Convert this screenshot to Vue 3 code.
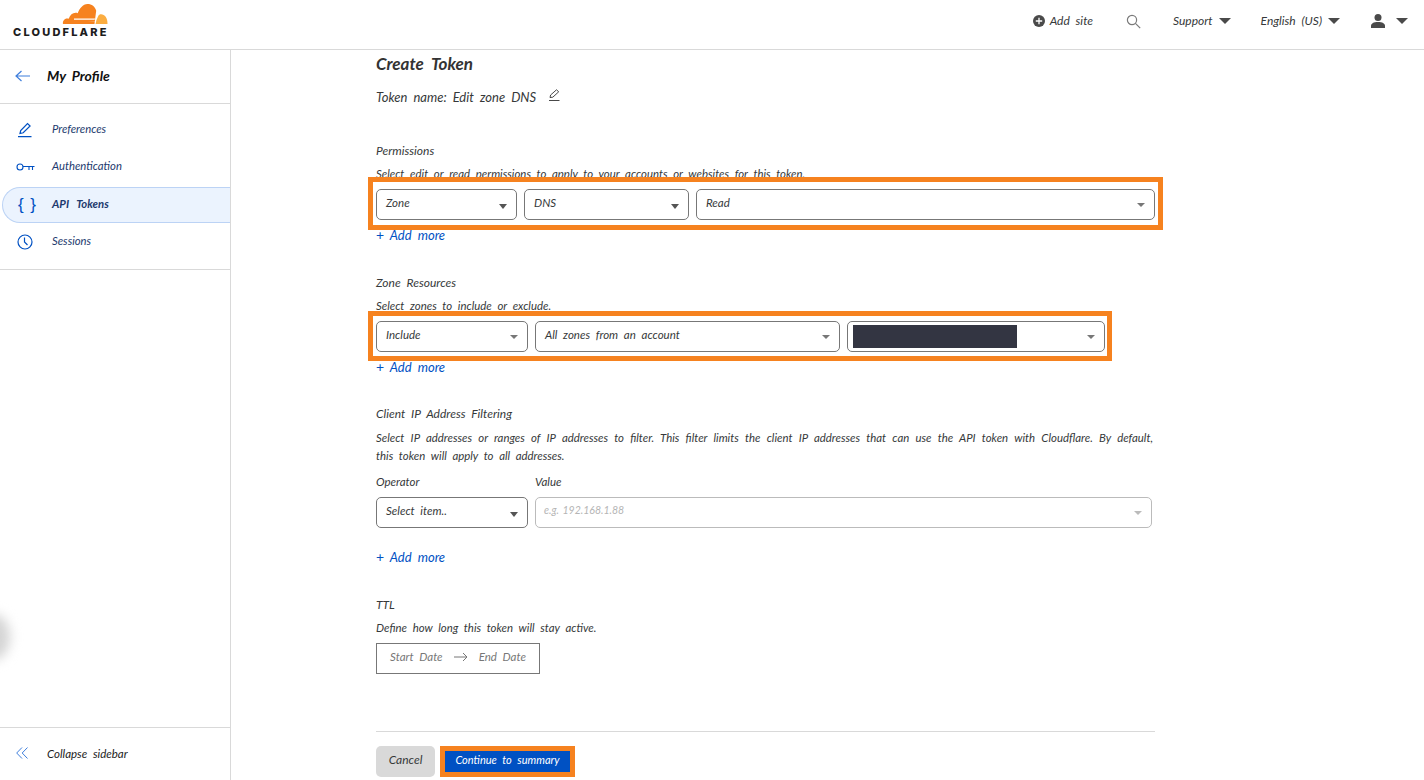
<template>
  <div class="page">
    <header class="topbar">
      <div class="logo">
        <svg class="cloud" width="46" height="22" viewBox="0 0 46 22">
          <path fill="#f6821f" d="M1 21c-.6-3 1.400-5.500 4.200-5.500.6 0 1 .1 1.500.3C8 12 10.600 9.800 13.500 9.800c.9 0 1.500.1 2.200.4C17.500 5.700 20.800 1 25.500 1c4.200 0 7.600 2.700 8.700 6.700l-.6 4.500L32.500 21z"/>
          <path fill="#fbad41" d="M33.500 21l1-4 2-4.500c.8-.9 1.500-1.300 2.500-1.300 3.800 0 6.500 3.500 6.500 9.800z"/>
          <path fill="#fff" d="M12 15.500h21.500l-1 1.200H12zM33.500 18.200l-8-.2h8.800z"/>
        </svg>
        <span class="wordmark">CLOUDFLARE</span>
      </div>
      <nav class="topnav">
        <a class="add-site">
          <svg width="12" height="12" viewBox="0 0 12 12"><circle cx="6" cy="6" r="6" fill="#4a4a4a"/><path d="M6 2.800v6.400M2.800 6h6.400" stroke="#fff" stroke-width="1.300"/></svg>
          <span>Add site</span>
        </a>
        <svg class="search" width="15" height="15" viewBox="0 0 15 15" fill="none" stroke="#7a7a7a" stroke-width="1.200"><circle cx="6" cy="6" r="4.600"/><path d="M9.400 9.400l4.800 4.800"/></svg>
        <a class="menu support">Support <i class="caret"></i></a>
        <a class="menu lang">English (US) <i class="caret"></i></a>
        <a class="menu account">
          <svg width="14" height="14" viewBox="0 0 14 14" fill="#4a4a4a"><circle cx="7" cy="3.600" r="3.500"/><path d="M0 14v-2.200c0-2.200 2.600-3.800 7-3.800s7 1.600 7 3.800V14z"/></svg>
          <i class="caret"></i>
        </a>
      </nav>
    </header>

    <div class="body">
      <aside class="sidebar">
        <div class="profile">
          <svg width="16" height="12" viewBox="0 0 16 12" fill="none" stroke="#3f7fdc" stroke-width="1.200"><path d="M15 6H1M6.500 1L1 6l5.500 5"/></svg>
          <span>My Profile</span>
        </div>
        <ul class="nav">
          <li v-for="item in navItems" :key="item.label" :class="{ active: item.active }">
            <span class="nav-icon">
              <svg v-if="item.icon === 'pencil'" width="16" height="16" viewBox="0 0 16 16" fill="none" stroke="#0051c3" stroke-width="1.200"><path d="M3 11.500l.7-3L10.500 1.500l2.600 2.500-6.900 6.800zM1 14.700h13.500"/></svg>
              <svg v-else-if="item.icon === 'key'" width="19" height="8" viewBox="0 0 19 8" fill="none" stroke="#0051c3" stroke-width="1.100"><circle cx="4" cy="4" r="3"/><path d="M7 3.500h11.500M13 3.500V7M16.500 3.500V7"/></svg>
              <span v-else-if="item.icon === 'braces'" class="braces">{ }</span>
              <svg v-else width="16" height="16" viewBox="0 0 16 16" fill="none" stroke="#0051c3" stroke-width="1.200"><circle cx="8" cy="8" r="7"/><path d="M7.500 3.500V8l3 3"/></svg>
            </span>
            <span class="nav-label">{{ item.label }}</span>
          </li>
        </ul>
        <div class="collapse">
          <svg width="12" height="12" viewBox="0 0 12 12" fill="none" stroke="#3f7fdc" stroke-width="1"><path d="M6 .5L.7 6 6 11.500M11.500.5L6.200 6l5.300 5.500"/></svg>
          <span>Collapse sidebar</span>
        </div>
      </aside>

      <main class="content">
        <h1>Create Token</h1>
        <div class="token-name">
          <span>Token name: Edit zone DNS</span>
          <svg width="13" height="13" viewBox="0 0 13 13" fill="none" stroke="#333" stroke-width=".9"><path d="M2 8.500l.6-2.500L8.500.8l2.200 2-5.900 5.400zM1 11.500h10.500"/></svg>
        </div>

        <section class="permissions">
          <h2>Permissions</h2>
          <p>Select edit or read permissions to apply to your accounts or websites for this token.</p>
          <div class="mark mark-one">
            <div class="row">
              <div class="select w141">Zone<i class="arrow"></i></div>
              <div class="select w165">DNS<i class="arrow"></i></div>
              <div class="select grow">Read<i class="arrow small"></i></div>
            </div>
          </div>
          <a class="add-more first"><b>+</b> Add more</a>
        </section>

        <section class="zones">
          <h2>Zone Resources</h2>
          <p>Select zones to include or exclude.</p>
          <div class="mark mark-two">
            <div class="row">
              <div class="select w152">Include<i class="arrow small"></i></div>
              <div class="select w305">All zones from an account<i class="arrow small"></i></div>
              <div class="select w258"><span class="redacted"></span><i class="arrow small"></i></div>
            </div>
          </div>
          <a class="add-more second"><b>+</b> Add more</a>
        </section>

        <section class="ip-filter">
          <h2>Client IP Address Filtering</h2>
          <p class="long">Select IP addresses or ranges of IP addresses to filter. This filter limits the client IP addresses that can use the API token with Cloudflare. By default, this token will apply to all addresses.</p>
          <div class="labels">
            <label class="w152">Operator</label>
            <label>Value</label>
          </div>
          <div class="row narrow">
            <div class="select w152">Select item..<i class="arrow"></i></div>
            <div class="select grow disabled">e.g. 192.168.1.88<i class="arrow small"></i></div>
          </div>
          <a class="add-more spaced"><b>+</b> Add more</a>
        </section>

        <section class="ttl">
          <h2>TTL</h2>
          <p>Define how long this token will stay active.</p>
          <div class="dates">
            <span>Start Date</span>
            <svg width="14" height="10" viewBox="0 0 14 10" fill="none" stroke="#777" stroke-width="1"><path d="M0 5h13M9 1l4 4-4 4"/></svg>
            <span>End Date</span>
          </div>
        </section>

        <hr />
        <div class="actions">
          <button class="cancel">Cancel</button>
          <button class="continue">Continue to summary</button>
        </div>
      </main>
    </div>
    <div class="blob"></div>
  </div>
</template>

<script setup>
const navItems = [
  { label: "Preferences", icon: "pencil" },
  { label: "Authentication", icon: "key" },
  { label: "API Tokens", icon: "braces", active: true },
  { label: "Sessions", icon: "clock" },
];
</script>

<style>
html,
body {
  margin: 0;
  background: #fff;
  overflow: hidden;
}
</style>

<style scoped>
.page {
  position: relative;
  width: 1424px;
  height: 780px;
  overflow: hidden;
  font-family: "Lato", "Liberation Sans", sans-serif;
  font-style: italic;
  font-size: 12px;
  color: #36393a;
  word-spacing: 3px;
  background: #fff;
}
.topbar {
  height: 49px;
  border-bottom: 1px solid #d9d9d9;
  display: flex;
  justify-content: space-between;
}
.logo {
  margin-left: 13px;
  width: 96px;
}
.cloud {
  display: block;
  margin: 3px 0 0 49px;
}
.wordmark {
  display: block;
  font-family: "Inter", sans-serif;
  font-style: normal;
  font-weight: 800;
  font-size: 11px;
  line-height: 10px;
  letter-spacing: 2.200px;
  color: #1d1d1d;
  word-spacing: 0;
  margin-top: 2px;
  white-space: nowrap;
}
.topnav {
  display: flex;
  align-items: center;
  height: 40px;
  font-size: 12px;
  margin-right: 16px;
}
.topnav svg,
.topnav .caret {
  margin-top: 2px;
}
.add-site {
  display: flex;
  align-items: center;
  gap: 5px;
}
.search {
  margin-left: 33px;
}
.menu {
  display: flex;
  align-items: center;
  gap: 6px;
}
.support {
  margin-left: 32px;
}
.lang {
  margin-left: 30px;
}
.account {
  margin-left: 31px;
  gap: 11px;
}
.caret {
  display: inline-block;
  width: 0;
  height: 0;
  border-left: 6px solid transparent;
  border-right: 6px solid transparent;
  border-top: 6px solid #4a4a4a;
}
.body {
  display: flex;
  height: 730px;
}
.sidebar {
  width: 230px;
  border-right: 1px solid #d9d9d9;
  display: flex;
  flex-direction: column;
}
.profile {
  height: 51px;
  padding-bottom: 2px;
  border-bottom: 1px solid #d9d9d9;
  display: flex;
  align-items: center;
  gap: 16px;
  padding-left: 15px;
  color: #111;
  font-size: 14px;
  font-weight: 700;
}
.nav {
  list-style: none;
  margin: 0;
  padding: 7px 0 0;
  height: 166px;
  box-sizing: border-box;
  border-bottom: 1px solid #d9d9d9;
  color: #1d3a6e;
  font-size: 11.300px;
}
.nav li {
  height: 37px;
  display: flex;
  align-items: center;
  box-sizing: border-box;
}
.nav-label {
  margin-top: -2px;
}
.nav li.active {
  background: #ebf3fe;
  border: 1px solid #bcd3f5;
  border-right: 0;
  border-radius: 18px 0 0 18px;
  height: 36px;
  margin: 2px 0 0 2px;
  font-weight: 700;
  word-spacing: 5px;
}
.nav li.active .nav-label {
  margin-top: -3px;
}
.nav-icon {
  width: 52px;
  display: flex;
  justify-content: center;
  padding-right: 2px;
  box-sizing: border-box;
}
.nav li.active .nav-icon {
  width: 49px;
  padding-right: 1px;
}
.braces {
  font-family: "Liberation Sans", sans-serif;
  font-style: normal;
  font-weight: 400;
  font-size: 17px;
  color: #0051c3;
  word-spacing: 2px;
}
.collapse {
  margin-top: auto;
  height: 50px;
  padding-bottom: 2px;
  border-top: 1px solid #d9d9d9;
  display: flex;
  align-items: center;
  gap: 19px;
  padding-left: 16px;
  color: #222;
  font-size: 11.500px;
}
.content {
  padding: 4px 0 0 145px;
  width: 779px;
}
h1 {
  margin: 0;
  font-size: 17px;
  line-height: 20px;
  font-weight: 700;
  color: #333;
  word-spacing: 4px;
}
.token-name {
  margin-top: 15px;
  height: 16px;
  line-height: 16px;
  display: flex;
  align-items: center;
  gap: 12px;
  font-size: 13px;
}
.token-name svg {
  margin-top: -4px;
}
section p,
h2 {
  margin: 0;
  font-size: 12px;
  font-weight: 400;
  line-height: 16px;
}
section p {
  margin-top: 7px;
  font-size: 11.400px;
}
.permissions {
  margin-top: 38px;
}
.zones {
  margin-top: 32px;
}
.ip-filter {
  margin-top: 31px;
}
.ttl {
  margin-top: 32px;
}
.long {
  line-height: 18px;
  text-align: justify;
  width: 777px;
}
section p.long {
  margin-top: 7px;
}
.mark {
  outline: 5px solid #f6821f;
  position: relative;
}
.mark-one {
  margin-left: -3px;
  margin-right: -3px;
  padding: 7px 3px 5px;
}
.mark-two {
  margin-top: 2px;
  margin-left: -3px;
  width: 734px;
  padding: 5px 2px 4px 3px;
  box-sizing: border-box;
}
.row {
  display: flex;
  gap: 7px;
}
.narrow {
  width: 776px;
}
.select {
  position: relative;
  height: 31px;
  box-sizing: border-box;
  border: 1px solid #777;
  border-radius: 5px;
  padding-left: 9px;
  display: flex;
  align-items: center;
  padding-bottom: 4px;
  font-size: 11.500px;
}
.w141 {
  width: 141px;
}
.w165 {
  width: 165px;
}
.w152 {
  width: 152px;
}
.w305 {
  width: 305px;
}
.w258 {
  width: 258px;
  padding-left: 5px;
  padding-bottom: 0;
}
.grow {
  flex: 1;
}
.arrow {
  position: absolute;
  right: 9px;
  top: 14px;
  width: 0;
  height: 0;
  border-left: 4px solid transparent;
  border-right: 4px solid transparent;
  border-top: 5px solid #555;
}
.arrow.small {
  top: 13px;
  border-top-width: 4px;
  border-top-color: #777;
}
.redacted {
  width: 164px;
  height: 23px;
  background: #333542;
}
.disabled {
  border-color: #bbb;
  color: #b5b5b5;
  padding-left: 8px;
  padding-bottom: 6px;
  font-size: 10.500px;
  word-spacing: 1px;
}
.disabled .arrow {
  border-top-color: #bbb;
}
.add-more {
  display: block;
  margin-top: 7px;
  line-height: 16px;
  color: #0051c3;
  font-size: 13px;
}
.add-more b {
  font-style: normal;
  font-weight: 400;
  font-size: 14px;
}
.add-more.first {
  margin-top: 2px;
}
.add-more.second {
  margin-top: 3px;
}
.add-more.spaced {
  margin-top: 21px;
}
.labels {
  display: flex;
  gap: 7px;
  margin-top: 9px;
  height: 16px;
  line-height: 16px;
  font-size: 11.500px;
}
.labels + .row {
  margin-top: 7px;
}
.dates {
  margin-top: 7px;
  width: 164px;
  height: 31px;
  box-sizing: border-box;
  border: 1px solid #777;
  display: flex;
  align-items: center;
  justify-content: center;
  gap: 11px;
  color: #777;
  font-size: 11.500px;
  padding-bottom: 4px;
}
hr {
  margin: 57px 0 0;
  border: 0;
  height: 1px;
  background: #d9d9d9;
  width: 779px;
}
.actions {
  margin-top: 14px;
  display: flex;
  align-items: flex-start;
  gap: 10px;
}
button {
  font: inherit;
  font-size: 11px;
  border: 0;
  padding: 0 0 5px;
  word-spacing: 3px;
}
.cancel {
  width: 59px;
  height: 31px;
  border-radius: 5px;
  background: #d9d9d9;
  color: #36393a;
  font-size: 12px;
}
.continue {
  margin-top: 5px;
  width: 125px;
  height: 21px;
  background: #0051c3;
  color: #fff;
  outline: 5px solid #f6821f;
}
.blob {
  position: absolute;
  left: -24px;
  top: 614px;
  width: 34px;
  height: 46px;
  border-radius: 50%;
  background: #d4d4d4;
  filter: blur(6px);
}
</style>
